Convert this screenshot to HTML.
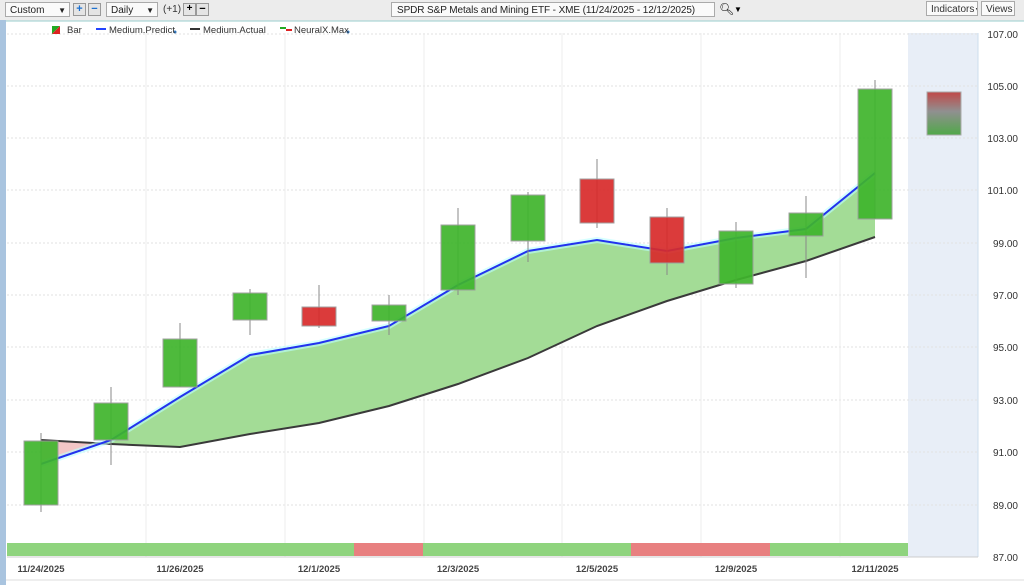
<!DOCTYPE html>
<html><head><meta charset="utf-8"><style>
body{margin:0;width:1024px;height:585px;overflow:hidden;background:#f0f0f0;font-family:"Liberation Sans",sans-serif;position:relative}
.tb{position:absolute;top:0;left:0;width:1024px;height:20px;background:#ececec}
.box{position:absolute;border:1px solid #aaa;background:#fafafa;font-size:10px;color:#222;height:15px;line-height:15px;box-sizing:border-box;padding-left:4px;white-space:nowrap;overflow:hidden}
.btn{position:absolute;width:13px;height:13px;border:1px solid #999;background:#e4e4e4;box-sizing:border-box;font-size:11px;line-height:10px;text-align:center;font-weight:bold}
</style></head><body>
<div class="tb"></div>
<div class="box" style="left:5px;top:2px;width:65px">Custom<span style="position:absolute;right:3px;font-size:8px">▼</span></div>
<div class="btn" style="left:73px;top:3px;color:#1a6fd0">+</div>
<div class="btn" style="left:88px;top:3px;color:#1a6fd0">−</div>
<div class="box" style="left:106px;top:2px;width:52px">Daily<span style="position:absolute;right:3px;font-size:8px">▼</span></div>
<div style="position:absolute;left:163px;top:4px;font-size:10px;color:#333">(+1)</div>
<div class="btn" style="left:183px;top:3px;font-size:10px">+</div>
<div class="btn" style="left:196px;top:3px">−</div>
<div class="box" style="left:391px;top:2px;width:324px;padding-left:5px;font-size:10px;letter-spacing:-0.1px">SPDR S&amp;P Metals and Mining ETF - XME (11/24/2025 - 12/12/2025)</div>
<div style="position:absolute;left:719px;top:2px;font-size:12px">&#x1F50D;&#xFE0E;</div>
<div style="position:absolute;left:734px;top:5px;font-size:8px">▼</div>
<div class="box" style="left:926px;top:1px;width:52px;font-size:10px;color:#333">Indicators<span style="font-size:7px">▼</span></div>
<div class="box" style="left:981px;top:1px;width:34px;font-size:10px;color:#333">Views <span style="font-size:7px">▼</span></div>
<div style="position:absolute;left:0;top:20px;width:6px;height:565px;background:#a9c4df"></div>
<svg style="position:absolute;left:0;top:0" width="1024" height="585" xmlns="http://www.w3.org/2000/svg" font-family="Liberation Sans, sans-serif">
<rect x="6" y="21" width="1018" height="564" fill="#fff"/>
<line x1="6" y1="21" x2="1024" y2="21" stroke="#9cc" />
<rect x="908" y="33" width="70" height="524" fill="#e8eef7"/>
<g stroke="#e2e2e2" stroke-dasharray="2,2">
<line x1="7" y1="34" x2="978" y2="34"/><line x1="7" y1="86" x2="978" y2="86"/><line x1="7" y1="138" x2="978" y2="138"/><line x1="7" y1="190" x2="978" y2="190"/><line x1="7" y1="243" x2="978" y2="243"/><line x1="7" y1="295" x2="978" y2="295"/><line x1="7" y1="347" x2="978" y2="347"/><line x1="7" y1="400" x2="978" y2="400"/><line x1="7" y1="452" x2="978" y2="452"/><line x1="7" y1="505" x2="978" y2="505"/>
</g>
<g stroke="#ececec">
<line x1="146" y1="33" x2="146" y2="557"/><line x1="285" y1="33" x2="285" y2="557"/><line x1="424" y1="33" x2="424" y2="557"/><line x1="562" y1="33" x2="562" y2="557"/><line x1="701" y1="33" x2="701" y2="557"/><line x1="840" y1="33" x2="840" y2="557"/>
</g>
<line x1="978" y1="33" x2="978" y2="557" stroke="#cde"/>
<g font-size="10" fill="#333" text-anchor="end">
<text x="1018" y="38">107.00</text><text x="1018" y="90">105.00</text><text x="1018" y="142">103.00</text><text x="1018" y="194">101.00</text><text x="1018" y="247">99.00</text><text x="1018" y="299">97.00</text><text x="1018" y="351">95.00</text><text x="1018" y="404">93.00</text><text x="1018" y="456">91.00</text><text x="1018" y="509">89.00</text><text x="1018" y="561">87.00</text>
</g>
<polygon points="41,440 100,443 41,464" fill="#f3c6c6"/>
<polygon points="100,443 111,440 180,397 250,355 319,343 389,326 458,285 528,251 597,240 667,251 736,238 806,229 875,173 875,237 806,261 736,280 667,301 597,326 528,358 458,384 389,406 319,423 250,434 180,447 111,444" fill="#a3dc96"/>
<polyline points="41,440 111,444 180,447 250,434 319,423 389,406 458,384 528,358 597,326 667,301 736,280 806,261 875,237" fill="none" stroke="#3a3a3a" stroke-width="2"/>
<polyline points="41,464 111,440 180,397 250,355 319,343 389,326 458,285 528,251 597,240 667,251 736,238 806,229 875,173" fill="none" stroke="#bff" stroke-width="6" opacity=".6"/>
<polyline points="41,464 111,440 180,397 250,355 319,343 389,326 458,285 528,251 597,240 667,251 736,238 806,229 875,173" fill="none" stroke="#2233ee" stroke-width="2"/>
<g stroke="#888" stroke-width="1">
<line x1="41" y1="433" x2="41" y2="512"/><line x1="111" y1="387" x2="111" y2="465"/><line x1="180" y1="323" x2="180" y2="387"/><line x1="250" y1="289" x2="250" y2="335"/><line x1="319" y1="285" x2="319" y2="328"/><line x1="389" y1="295" x2="389" y2="335"/><line x1="458" y1="208" x2="458" y2="295"/><line x1="528" y1="192" x2="528" y2="262"/><line x1="597" y1="159" x2="597" y2="228"/><line x1="667" y1="208" x2="667" y2="275"/><line x1="736" y1="222" x2="736" y2="288"/><line x1="806" y1="196" x2="806" y2="278"/><line x1="875" y1="80" x2="875" y2="219"/>
</g>
<g stroke="#9a9a9a" stroke-width="1" opacity=".92">
<rect x="24" y="441" width="34" height="64" fill="#3fb52c"/>
<rect x="94" y="403" width="34" height="37" fill="#3fb52c"/>
<rect x="163" y="339" width="34" height="48" fill="#3fb52c"/>
<rect x="233" y="293" width="34" height="27" fill="#3fb52c"/>
<rect x="302" y="307" width="34" height="19" fill="#d92b2b"/>
<rect x="372" y="305" width="34" height="16" fill="#3fb52c"/>
<rect x="441" y="225" width="34" height="65" fill="#3fb52c"/>
<rect x="511" y="195" width="34" height="46" fill="#3fb52c"/>
<rect x="580" y="179" width="34" height="44" fill="#d92b2b"/>
<rect x="650" y="217" width="34" height="46" fill="#d92b2b"/>
<rect x="719" y="231" width="34" height="53" fill="#3fb52c"/>
<rect x="789" y="213" width="34" height="23" fill="#3fb52c"/>
<rect x="858" y="89" width="34" height="130" fill="#3fb52c"/>
</g>
<defs><linearGradient id="g" x1="0" y1="0" x2="0" y2="1"><stop offset="0" stop-color="#c04848"/><stop offset=".45" stop-color="#909090"/><stop offset="1" stop-color="#50a848"/></linearGradient></defs>
<rect x="927" y="92" width="34" height="43" fill="url(#g)" stroke="#aaa"/>
<rect x="7" y="543" width="347" height="13" fill="#8fd47e"/>
<rect x="354" y="543" width="69" height="13" fill="#e88080"/>
<rect x="423" y="543" width="208" height="13" fill="#8fd47e"/>
<rect x="631" y="543" width="139" height="13" fill="#e88080"/>
<rect x="770" y="543" width="138" height="13" fill="#8fd47e"/>
<line x1="7" y1="557" x2="978" y2="557" stroke="#ccc"/>
<g font-size="9.5" font-weight="bold" fill="#444" text-anchor="middle">
<text x="41" y="572">11/24/2025</text><text x="180" y="572">11/26/2025</text><text x="319" y="572">12/1/2025</text><text x="458" y="572">12/3/2025</text><text x="597" y="572">12/5/2025</text><text x="736" y="572">12/9/2025</text><text x="875" y="572">12/11/2025</text>
</g>
<line x1="6" y1="580" x2="1024" y2="580" stroke="#ddd"/>
<polygon points="52,26 60,26 52,34" fill="#22aa22"/><polygon points="60,26 60,34 52,34" fill="#dd2222"/>
<line x1="96" y1="29" x2="106" y2="29" stroke="#2244ff" stroke-width="2"/>
<line x1="190" y1="29" x2="200" y2="29" stroke="#333" stroke-width="2"/>
<line x1="280" y1="28" x2="286" y2="28" stroke="#22aa22" stroke-width="2"/><line x1="286" y1="30" x2="292" y2="30" stroke="#dd2222" stroke-width="2"/>
<circle cx="175" cy="32" r="1.5" fill="#3377bb"/><circle cx="348" cy="32" r="1.5" fill="#3377bb"/>
<g font-size="9.5" fill="#333"><text x="67" y="33">Bar</text><text x="109" y="33">Medium.Predict</text><text x="203" y="33">Medium.Actual</text><text x="294" y="33">NeuralX.Max</text></g>
</svg>
</body></html>
